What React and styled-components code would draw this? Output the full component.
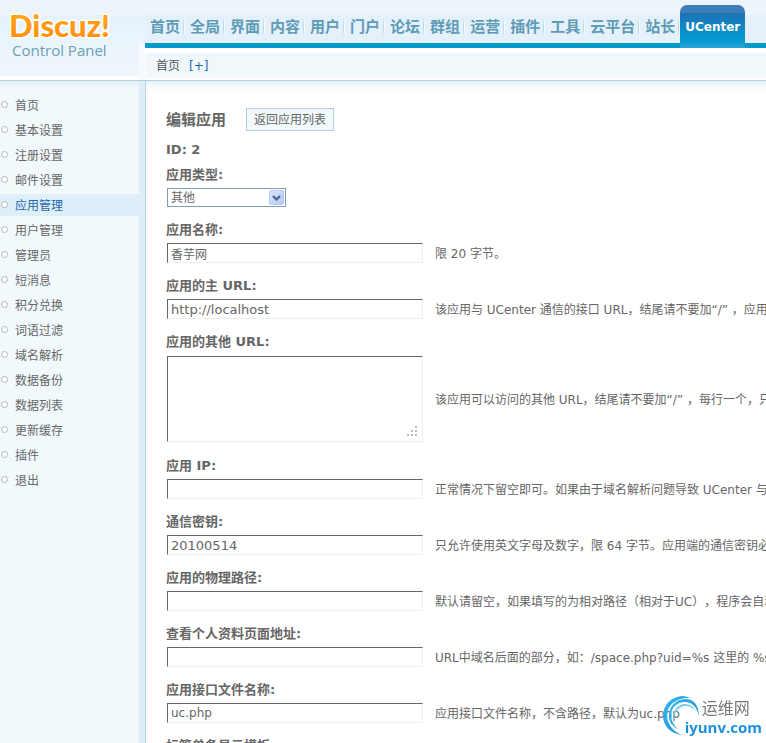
import React from "react";
import styled, { createGlobalStyle } from "styled-components";

const navItems = [
  "首页",
  "全局",
  "界面",
  "内容",
  "用户",
  "门户",
  "论坛",
  "群组",
  "运营",
  "插件",
  "工具",
  "云平台",
  "站长",
];

const menuItems = [
  "首页",
  "基本设置",
  "注册设置",
  "邮件设置",
  "应用管理",
  "用户管理",
  "管理员",
  "短消息",
  "积分兑换",
  "词语过滤",
  "域名解析",
  "数据备份",
  "数据列表",
  "更新缓存",
  "插件",
  "退出",
];

const fields = [
  { id: "name", label: "应用名称:", value: "香芋网", tip: "限 20 字节。" },
  {
    id: "url",
    label: "应用的主 URL:",
    value: "http://localhost",
    latin: true,
    tip: "该应用与 UCenter 通信的接口 URL，结尾请不要加“/” ，应用的通知将只发送给该 URL",
  },
  {
    id: "extraurl",
    label: "应用的其他 URL:",
    value: "",
    multiline: true,
    tip: "该应用可以访问的其他 URL，结尾请不要加“/” ，每行一个，只有当前访问的域名匹配时有效",
  },
  {
    id: "ip",
    label: "应用 IP:",
    value: "",
    tip: "正常情况下留空即可。如果由于域名解析问题导致 UCenter 与该应用通信失败，请设置为该应用所在服务器的 IP 地址。",
  },
  {
    id: "authkey",
    label: "通信密钥:",
    value: "20100514",
    latin: true,
    tip: "只允许使用英文字母及数字，限 64 字节。应用端的通信密钥必须与此设置保持一致，否则该应用将无法与 UCenter 正常通信。",
  },
  {
    id: "apppath",
    label: "应用的物理路径:",
    value: "",
    tip: "默认请留空，如果填写的为相对路径（相对于UC），程序会自动转换为绝对路径，如 ../",
  },
  {
    id: "viewprourl",
    label: "查看个人资料页面地址:",
    value: "",
    tip: "URL中域名后面的部分，如：/space.php?uid=%s 这里的 %s 代表UID",
  },
  {
    id: "apifilename",
    label: "应用接口文件名称:",
    value: "uc.php",
    tip: "应用接口文件名称，不含路径，默认为uc.php",
  },
  { id: "tagtemplates", label: "标签单条显示模板:", value: "", multiline: true, tip: "" },
];

function Logo() {
  return (
    <LogoSvg width="139" height="76" viewBox="0 0 139 76">
      <defs>
        <linearGradient id="logoFill" x1="0" y1="0" x2="0" y2="1">
          <stop offset="0" stopColor="#ffad22" />
          <stop offset="1" stopColor="#ff8a0c" />
        </linearGradient>
      </defs>
      <text className="brand" x="9" y="37">
        Discuz!
      </text>
      <text className="sub" x="12" y="56">
        Control Panel
      </text>
    </LogoSvg>
  );
}

function Field({ field }) {
  const { id, label, value, tip, multiline, latin } = field;
  return (
    <FieldBlock>
      <Label htmlFor={id}>{label}</Label>
      <FieldRow $tall={multiline}>
        {multiline ? (
          <AreaWrap>
            <TextArea id={id} defaultValue={value} />
            <Grip width="12" height="12" viewBox="0 0 12 12">
              <path
                fill="#bbb"
                d="M9 0h2v2h-2zM5 4h2v2h-2zM9 4h2v2h-2zM1 8h2v2h-2zM5 8h2v2h-2zM9 8h2v2h-2z"
              />
            </Grip>
          </AreaWrap>
        ) : (
          <TextInput id={id} type="text" defaultValue={value} $latin={latin} />
        )}
        <Tip>{tip}</Tip>
      </FieldRow>
    </FieldBlock>
  );
}

function SiteMark() {
  return (
    <Mark>
      <svg width="40" height="42" viewBox="0 0 40 42">
        <defs>
          <linearGradient id="markFill" x1="0" y1="0" x2="1" y2="1">
            <stop offset="0" stopColor="#3dbcf0" />
            <stop offset="1" stopColor="#0f86d6" />
          </linearGradient>
        </defs>
        <path
          fill="url(#markFill)"
          d="M20 39C8 38 0 30 0 20C0 9 8 1 19 0C22 0 25 1 27 2C14 1 4 9 4 19C4 28 10 36 20 39Z"
        />
        <path
          fill="url(#markFill)"
          d="M16 34C9 30 5 25 6 18C7 9 14 3 23 3C31 3 36 10 36 20C34 11 29 6 22 6C14 6 8 12 8 19C8 25 11 30 16 34Z"
        />
        <path
          fill="#7acdf2"
          d="M11 27C8 18 13 8 22 8C27 8 31 11 33 15C29 11 26 10 22 10C15 11 10 17 11 27Z"
        />
      </svg>
      <MarkText>
        <span className="cn">运维网</span>
        <span className="domain">iyunv.com</span>
      </MarkText>
    </Mark>
  );
}

export default function App() {
  return (
    <Page>
      <GlobalStyle />
      <Header>
        <LogoCell>
          <Logo />
        </LogoCell>
        <HeaderMain>
          <Nav>
            {navItems.map((item) => (
              <NavLink key={item} href="#">
                {item}
              </NavLink>
            ))}
            <ActiveTab href="#">UCenter</ActiveTab>
          </Nav>
          <Crumbs>
            <span>首页</span>
            <a href="#">[+]</a>
          </Crumbs>
        </HeaderMain>
      </Header>
      <Body>
        <Sidebar>
          <Menu>
            {menuItems.map((item) => (
              <MenuItem key={item} $active={item === "应用管理"}>
                <a href="#">{item}</a>
              </MenuItem>
            ))}
          </Menu>
        </Sidebar>
        <Main>
          <TitleRow>
            <h1>编辑应用</h1>
            <BackButton type="button">返回应用列表</BackButton>
          </TitleRow>
          <IdLine>ID: 2</IdLine>
          <FieldBlock>
            <Label htmlFor="apptype">应用类型:</Label>
            <SelectWrap>
              <Select id="apptype" defaultValue="OTHER">
                <option value="OTHER">其他</option>
                <option value="UCHOME">UCenter Home</option>
                <option value="DISCUZ">Discuz!</option>
              </Select>
              <Arrow>
                <svg width="9" height="6" viewBox="0 0 9 6">
                  <path d="M1 1L4.500 4.500L8 1" fill="none" stroke="#4d6185" strokeWidth="2.200" />
                </svg>
              </Arrow>
            </SelectWrap>
          </FieldBlock>
          {fields.map((field) => (
            <Field key={field.id} field={field} />
          ))}
        </Main>
      </Body>
      <SiteMark />
    </Page>
  );
}

const GlobalStyle = createGlobalStyle`
  *,
  *::before,
  *::after {
    box-sizing: border-box;
  }

  body {
    margin: 0;
    background: #fff;
    color: #666;
    font-family: "DejaVu Sans", "Noto Sans CJK SC", sans-serif;
    font-size: 12px;
    line-height: 20px;
    text-spacing-trim: space-all;
  }

  a {
    text-decoration: none;
  }

  input,
  select,
  textarea,
  button {
    margin: 0;
    color: #666;
    font-family: inherit;
    font-size: 12px;
  }
`;

const Page = styled.div`
  display: flex;
  flex-direction: column;
  height: 100vh;
  overflow: hidden;
`;

const Header = styled.header`
  display: flex;
  flex: none;
  border-bottom: 1px solid #b5cfd9;
  background: linear-gradient(#ecf4fc 15px, #e4f1fb 15px);
`;

const LogoCell = styled.div`
  flex: none;
  width: 145px;
  height: 80px;
  background:
    linear-gradient(transparent 43px, #f6fafe 43px) right / 6px 100% no-repeat,
    linear-gradient(#ecf4fc 15px, #e5f2fb 15px, #f0f7fc 76px, #fff 76px);
`;

const LogoSvg = styled.svg`
  display: block;

  .brand {
    font: 900 31px Lato, sans-serif;
    fill: url(#logoFill);
    stroke: #fff;
    stroke-width: 3px;
    stroke-linejoin: round;
    paint-order: stroke;
  }

  .sub {
    font: 15px "Open Sans", sans-serif;
    fill: #6ba0b6;
  }
`;

const HeaderMain = styled.div`
  flex: 1;
  min-width: 0;
`;

const Nav = styled.nav`
  display: flex;
  height: 48px;
  border-bottom: 5px solid #09c;
  white-space: nowrap;
`;

const NavLink = styled.a`
  position: relative;
  flex: none;
  height: 43px;
  padding: 0 5px;
  color: #5e9bb4;
  font-size: 15px;
  font-weight: bold;
  line-height: 55px;

  &::after {
    content: "";
    position: absolute;
    top: 17px;
    right: 0;
    width: 2px;
    height: 20px;
    background: linear-gradient(90deg, #bcd8e4 50%, #f6fbfe 50%);
    mask-image: linear-gradient(transparent, #000 40%, #000 60%, transparent);
  }
`;

const ActiveTab = styled.a`
  flex: none;
  height: 43px;
  margin-top: 5px;
  padding: 0 5px;
  border-radius: 7px 7px 0 0;
  background: linear-gradient(#3d7db8 8px, #1e72b4 8px, #0498cf 32px, #0498cf 36px, #2ba5d5 43px);
  color: #fff;
  font-weight: bold;
  line-height: 45px;
`;

const Crumbs = styled.div`
  display: flex;
  gap: 9px;
  height: 32px;
  padding-left: 10px;
  border: solid #fff;
  border-width: 5px 0 2px 1px;
  background: #f0f8fc;
  color: #555;
  line-height: 27px;

  a {
    color: #2366a8;
  }
`;

const Body = styled.div`
  display: flex;
  flex: 1;
  min-height: 0;
`;

const Sidebar = styled.aside`
  flex: none;
  width: 146px;
  padding-top: 13px;
  border-right: 1px solid #b5cfd9;
  background:
    linear-gradient(#deeffa, #deeffa) right / 6px 100% no-repeat,
    linear-gradient(#e6f2fa, #f2f9fd 10px);
`;

const Menu = styled.ul`
  display: flex;
  flex-direction: column;
  gap: 3px;
  margin: 0;
  padding: 0;
  list-style: none;
`;

const MenuItem = styled.li`
  display: flex;
  gap: 7px;
  height: 22px;
  padding-left: 1px;
  background: ${(props) => (props.$active ? "#deeffa" : "transparent")};
  line-height: 24px;

  &::before {
    content: "";
    width: 7px;
    height: 7px;
    margin-top: 7px;
    border: 1px solid #b4b4b4;
    border-radius: 50%;
    background: #fff;
  }

  a {
    color: ${(props) => (props.$active ? "#2366a8" : "#666")};
  }
`;

const Main = styled.main`
  flex: 1;
  min-width: 0;
  padding: 27px 0 0 20px;
  overflow: hidden;
  background: linear-gradient(#e6f3f8, #fff 10px);
`;

const TitleRow = styled.div`
  display: flex;
  align-items: center;
  gap: 20px;
  height: 23px;
  margin-bottom: 9px;

  h1 {
    margin: 0;
    font-size: 15px;
  }
`;

const BackButton = styled.button`
  height: 23px;
  padding: 1px 7px 0;
  border: 1px solid #b5cfd9;
  background: #f2f9fd;
  line-height: 20px;
`;

const IdLine = styled.p`
  margin: 0 0 4px;
  font-size: 13px;
  font-weight: bold;
`;

const FieldBlock = styled.div`
  margin-bottom: 12px;
`;

const Label = styled.label`
  display: block;
  height: 20px;
  margin-bottom: 4px;
  font-size: 13px;
  font-weight: bold;
  line-height: 22px;
`;

const FieldRow = styled.div`
  display: flex;
  align-items: center;
  gap: 12px;
  height: ${(props) => (props.$tall ? "88px" : "20px")};
  padding-left: 1px;
`;

const TextInput = styled.input`
  flex: none;
  width: 256px;
  height: 20px;
  padding: 0 3px;
  border: 1px solid;
  border-color: #666 #eee #eee #666;
  background: #fff;
  font-size: ${(props) => (props.$latin ? "13px" : "12px")};
`;

const AreaWrap = styled.div`
  position: relative;
  flex: none;
  width: 256px;
  height: 86px;
`;

const TextArea = styled.textarea`
  display: block;
  width: 100%;
  height: 100%;
  padding: 3px;
  border: 1px solid;
  border-color: #666 #eee #eee #666;
  background: #fff;
  resize: none;
`;

const Grip = styled.svg`
  position: absolute;
  right: 5px;
  bottom: 4px;
  pointer-events: none;
`;

const Tip = styled.span`
  padding-top: 2px;
  white-space: nowrap;
`;

const SelectWrap = styled.div`
  position: relative;
  width: 120px;
  padding-left: 1px;
`;

const Select = styled.select`
  display: block;
  width: 100%;
  height: 19px;
  padding: 1px 20px 0 3px;
  border: 1px solid #7f9db9;
  border-radius: 0;
  background: #fff;
  appearance: none;
`;

const Arrow = styled.span`
  position: absolute;
  top: 2px;
  right: 2px;
  display: flex;
  align-items: center;
  justify-content: center;
  width: 15px;
  height: 15px;
  border: 1px solid #b9cbf3;
  border-radius: 2px;
  background: linear-gradient(135deg, #dce6fd, #aec8f7);
  pointer-events: none;
`;

const Mark = styled.div`
  position: fixed;
  right: 4px;
  bottom: 5px;
  display: flex;
  height: 42px;
  pointer-events: none;
`;

const MarkText = styled.div`
  display: flex;
  flex-direction: column;
  margin-left: -18px;
  padding-top: 4px;
  line-height: 18px;

  .cn {
    padding-left: 17px;
    color: #777;
    font-size: 16px;
  }

  .domain {
    color: #1c90e0;
    font-family: "Open Sans", sans-serif;
    font-size: 15px;
    font-weight: bold;
  }
`;
